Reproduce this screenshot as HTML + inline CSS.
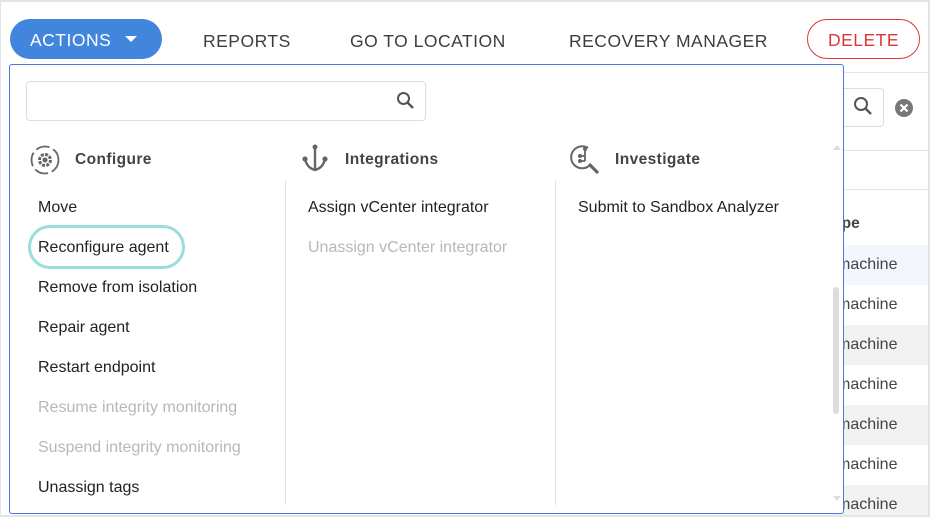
<!DOCTYPE html>
<html><head><style>
*{margin:0;padding:0;box-sizing:border-box}
body{width:930px;height:517px;overflow:hidden;background:#fff;font-family:"Liberation Sans",sans-serif;position:relative}
.frame{position:absolute;inset:0;border:2px solid #e4e4e4;border-left:1px solid #e4e4e4;z-index:5;pointer-events:none}
.abs{position:absolute}
.nav{font-size:17.5px;color:#3d3d3d;top:31px;letter-spacing:0.5px}
.row{position:absolute;left:833px;width:95px;height:40px;font-size:16px;color:#444;line-height:40px;padding-left:4px}
.dd{position:absolute;left:9px;top:64px;width:835px;height:450px;border:1px solid #4a78dc;border-radius:3px;background:#fff}
.item{position:absolute;font-size:16px;color:#222}
.dis{color:#b8b8b8}
.hdr{position:absolute;top:151px;font-size:15.5px;font-weight:bold;color:#444;letter-spacing:0.4px}
.div{position:absolute;top:180px;width:1px;height:325px;background:#e2e2e2}
</style></head><body>
<div class="frame"></div>
<div class="abs" style="left:10px;top:19px;width:152px;height:40px;border-radius:20px;background:#4285dc;color:#fff;font-size:17.5px;letter-spacing:0.5px;line-height:42px;padding-left:20px">ACTIONS <span style="display:inline-block;width:0;height:0;border-left:6px solid transparent;border-right:6px solid transparent;border-top:6px solid #fff;vertical-align:middle;margin-left:8px;margin-top:-4px"></span></div>
<div class="abs nav" style="left:203px">REPORTS</div>
<div class="abs nav" style="left:350px">GO TO LOCATION</div>
<div class="abs nav" style="left:569px">RECOVERY MANAGER</div>
<div class="abs" style="left:807px;top:19px;width:113px;height:40px;border:1px solid #d9383a;border-radius:20px;color:#d9383a;font-size:17.5px;letter-spacing:0.5px;line-height:40px;text-align:center">DELETE</div>
<div class="abs" style="left:843px;top:72px;width:85px;height:1px;background:#e4e4e4"></div>
<div class="abs" style="left:835px;top:88px;width:49px;height:39px;border:1px solid #ddd;border-radius:4px"></div>
<svg class="abs" style="left:853px;top:96px" width="22" height="22" viewBox="0 0 22 22"><circle cx="8" cy="8" r="6" fill="none" stroke="#555" stroke-width="2"/><path d="M12.5 12.5 L18 18" stroke="#555" stroke-width="2.4"/></svg>
<svg class="abs" style="left:894px;top:98px" width="20" height="20" viewBox="0 0 20 20"><circle cx="10" cy="10" r="9" fill="#777"/><path d="M6.5 6.5L13.5 13.5M13.5 6.5L6.5 13.5" stroke="#fff" stroke-width="2.2"/></svg>
<div class="abs" style="left:843px;top:150px;width:85px;height:1px;background:#e4e4e4"></div>
<div class="abs" style="left:843px;top:189px;width:85px;height:1px;background:#e4e4e4"></div>
<div class="abs" style="left:833px;top:215px;font-size:15.5px;font-weight:bold;color:#444">ype</div>
<div class="row" style="top:245px;background:#f3f7fd">machine</div>
<div class="row" style="top:285px">machine</div>
<div class="row" style="top:325px;background:#f2f2f2">machine</div>
<div class="row" style="top:365px">machine</div>
<div class="row" style="top:405px;background:#f2f2f2">machine</div>
<div class="row" style="top:445px">machine</div>
<div class="row" style="top:485px;height:30px;background:#f2f2f2">machine</div>
<div class="dd">
<div class="abs" style="left:16px;top:16px;width:400px;height:40px;border:1px solid #ddd;border-radius:4px"></div>
<svg class="abs" style="left:386px;top:26px" width="20" height="20" viewBox="0 0 20 20"><circle cx="7.5" cy="7.5" r="5.5" fill="none" stroke="#555" stroke-width="2"/><path d="M11.5 11.5L17 17" stroke="#555" stroke-width="2.4"/></svg>
<svg class="abs" style="left:822px;top:78px" width="10" height="8"><path d="M1 7L5 2L9 7Z" fill="#ddd"/></svg>
<div class="abs" style="left:823px;top:222px;width:6px;height:127px;border-radius:3px;background:#ddd"></div>
<svg class="abs" style="left:822px;top:430px" width="10" height="8"><path d="M1 1L5 6L9 1Z" fill="#ddd"/></svg>
</div>
<svg class="abs" style="left:29px;top:144px" width="32" height="32" viewBox="0 0 32 32"><circle cx="16" cy="16" r="13.5" fill="none" stroke="#666" stroke-width="1.8" stroke-dasharray="14 4"/><circle cx="16" cy="16" r="5.5" fill="none" stroke="#666" stroke-width="3" stroke-dasharray="3 1.3"/><circle cx="16" cy="16" r="2.5" fill="#666"/></svg>
<div class="hdr" style="left:75px">Configure</div>
<svg class="abs" style="left:301px;top:144px" width="30" height="30" viewBox="0 0 30 30"><circle cx="14" cy="3" r="2.5" fill="#666"/><path d="M14 3V26M4 15Q6 24 14 26Q22 24 24 15" fill="none" stroke="#666" stroke-width="2.4"/><circle cx="4" cy="15" r="2.6" fill="#666"/><circle cx="24" cy="15" r="2.6" fill="#666"/></svg>
<div class="hdr" style="left:345px">Integrations</div>
<svg class="abs" style="left:568px;top:143px" width="34" height="34" viewBox="0 0 34 34"><path d="M20 5A11 11 0 1 0 22 22" fill="none" stroke="#666" stroke-width="2"/><path d="M21 21L30 30" stroke="#666" stroke-width="3.2"/><path d="M13 13H17M17 6V18M11 18H17" stroke="#666" stroke-width="1.8" fill="none"/><circle cx="17" cy="6" r="2" fill="#666"/><circle cx="12" cy="13" r="2" fill="#666"/><circle cx="12" cy="18" r="2" fill="#666"/></svg>
<div class="hdr" style="left:615px">Investigate</div>
<div class="div" style="left:285px"></div>
<div class="div" style="left:555px"></div>
<div class="item" style="left:38px;top:199px">Move</div>
<div class="abs" style="left:28px;top:225px;width:157px;height:44px;border:3px solid #9adedb;border-radius:22px"></div>
<div class="item" style="left:38px;top:239px">Reconfigure agent</div>
<div class="item" style="left:38px;top:279px">Remove from isolation</div>
<div class="item" style="left:38px;top:319px">Repair agent</div>
<div class="item" style="left:38px;top:359px">Restart endpoint</div>
<div class="item dis" style="left:38px;top:399px">Resume integrity monitoring</div>
<div class="item dis" style="left:38px;top:439px">Suspend integrity monitoring</div>
<div class="item" style="left:38px;top:479px">Unassign tags</div>
<div class="item" style="left:308px;top:199px">Assign vCenter integrator</div>
<div class="item dis" style="left:308px;top:239px">Unassign vCenter integrator</div>
<div class="item" style="left:578px;top:199px">Submit to Sandbox Analyzer</div>
</body></html>
